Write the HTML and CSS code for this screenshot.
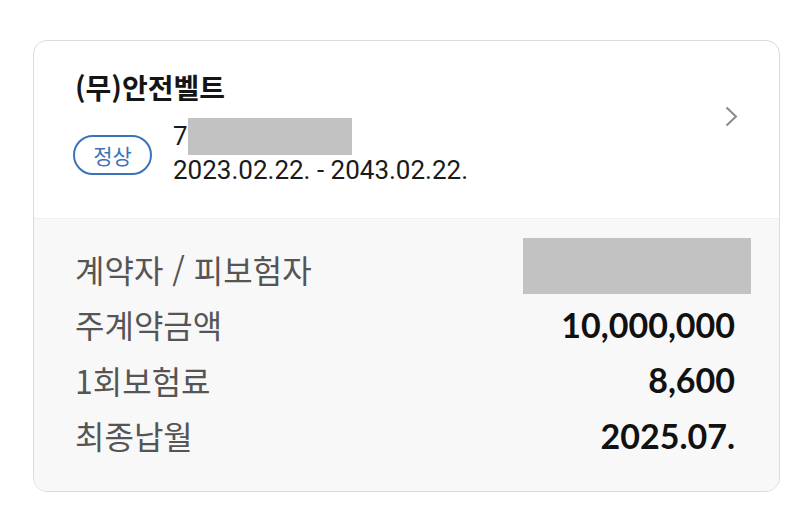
FILE: index.html
```html
<!DOCTYPE html>
<html lang="ko">
<head>
<meta charset="utf-8">
<link rel="stylesheet" href="styles.css">
</head>
<body>
<div class="card">
  <div class="top">
    <div class="info">
      <div class="title">(무)안전벨트</div>
      <div class="meta">
        <span class="badge">정상</span>
        <div class="lines">
          <div class="num">7<span class="mask mask-num"></span></div>
          <div class="date">2023.02.22. - 2043.02.22.</div>
        </div>
      </div>
    </div>
    <svg class="chev" width="14" height="22" viewBox="0 0 14 22"><path d="M1.5 1.5 L11 10.5 L1.5 19.5" fill="none" stroke="#8a8a8a" stroke-width="2"/></svg>
  </div>
  <div class="bottom">
    <div class="row"><span class="label">계약자 / 피보험자</span><span class="value"><span class="mask mask-name"></span></span></div>
    <div class="row"><span class="label">주계약금액</span><span class="value">10,000,000</span></div>
    <div class="row"><span class="label">1회보험료</span><span class="value">8,600</span></div>
    <div class="row"><span class="label">최종납월</span><span class="value">2025.07.</span></div>
  </div>
</div>
</body>
</html>
```
FILE: styles.css
```css
html, body {
  margin: 0;
  padding: 0;
  background: #ffffff;
}
body {
  padding: 40px 20px 0 33px;
}
.card {
  width: 745px;
  border: 1px solid #dcdcdc;
  border-radius: 14px;
  overflow: hidden;
  background: #ffffff;
}
.top {
  height: 178px;
  box-sizing: border-box;
  padding: 28px 40px 0 41px;
  display: flex;
  justify-content: space-between;
  border-bottom: 1px solid #efefef;
  font-family: Roboto, "Noto Sans CJK KR", sans-serif;
}
.title {
  font-size: 28px;
  font-weight: 700;
  color: #151515;
  line-height: 36px;
  font-family: "Noto Sans CJK KR", sans-serif;
}
.meta {
  display: flex;
  align-items: flex-start;
  margin-top: 13px;
}
.badge {
  width: 79px;
  height: 40px;
  margin-top: 17px;
  margin-left: -2px;
  box-sizing: border-box;
  border: 2px solid #3b74b6;
  border-radius: 20px;
  color: #3b74b6;
  font-size: 21px;
  display: flex;
  align-items: center;
  justify-content: center;
  font-family: "Noto Sans CJK KR", sans-serif;
}
.lines {
  margin-left: 21px;
  color: #1a1a1a;
  font-size: 26px;
}
.num {
  height: 37px;
  display: flex;
  align-items: center;
  line-height: 37px;
}
.date {
  line-height: 30px;
}
.mask {
  display: inline-block;
  background: #c2c2c2;
}
.mask-num {
  width: 164px;
  height: 37px;
}
.chev {
  margin-top: 37px;
}
.bottom {
  background: #f8f8f8;
  height: 272px;
  box-sizing: border-box;
  padding: 22px 44px 0 41px;
  font-family: Lato, "Noto Sans CJK KR", sans-serif;
}
.row {
  height: 55.5px;
  display: flex;
  justify-content: space-between;
  align-items: center;
}
.label {
  font-size: 32px;
  color: #555555;
  font-family: "Noto Sans CJK KR", sans-serif;
}
.value {
  font-size: 34px;
  font-weight: 700;
  color: #111111;
}
.mask-name {
  width: 228px;
  height: 56px;
  margin-top: -6px;
  margin-right: -16px;
  vertical-align: middle;
}
```
